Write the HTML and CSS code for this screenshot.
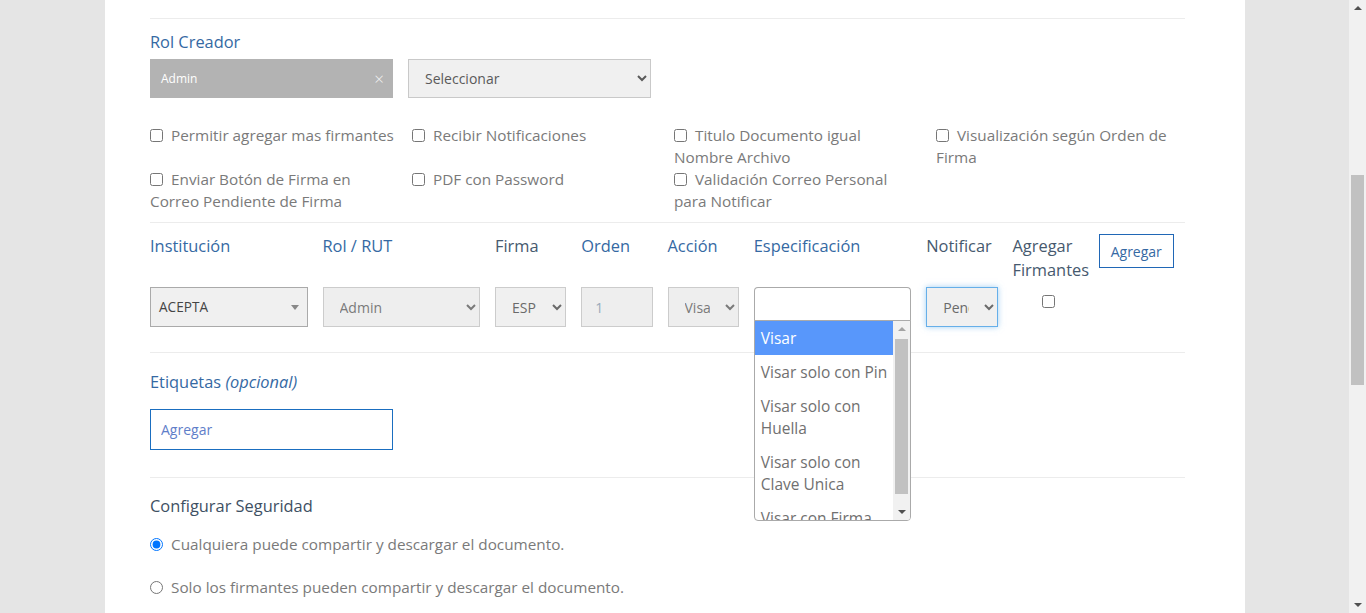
FILE: index.html
```html
<!DOCTYPE html>
<html lang="es">
<head>
<meta charset="utf-8">
<title>Firmantes</title>
<link rel="stylesheet" href="styles.css">
</head>
<body>
<div class="viewport">
  <div class="page">
    <div class="card">
      <hr class="rule rule-first">

      <div class="label-blue label-rol">Rol Creador</div>
      <div class="rol-row">
        <div class="tag"><span>Admin</span><span class="tag-x">×</span></div>
        <select class="sel sel-rol"><option>Seleccionar</option></select>
      </div>

      <div class="opts">
        <label class="opt"><input type="checkbox">Permitir agregar mas firmantes</label>
        <label class="opt"><input type="checkbox">Recibir Notificaciones</label>
        <label class="opt"><input type="checkbox">Titulo Documento igual Nombre Archivo</label>
        <label class="opt"><input type="checkbox">Visualización según Orden de Firma</label>
        <label class="opt"><input type="checkbox">Enviar Botón de Firma en Correo Pendiente de Firma</label>
        <label class="opt"><input type="checkbox">PDF con Password</label>
        <label class="opt"><input type="checkbox">Validación Correo Personal para Notificar</label>
      </div>

      <hr class="rule rule-sign">

      <div class="signers">
        <div class="head span2">Institución</div>
        <div class="head span2">Rol / RUT</div>
        <div class="head head-dark">Firma</div>
        <div class="head">Orden</div>
        <div class="head">Acción</div>
        <div class="head span2">Especificación</div>
        <div class="head head-dark">Notificar</div>
        <div class="head head-dark">Agregar Firmantes</div>
        <div class="head"><button class="btn-add" type="button">Agregar</button></div>

        <div class="cell span2">
          <div class="s2-single"><span>ACEPTA</span><span class="s2-arrow"></span></div>
        </div>
        <div class="cell span2"><select class="sel sel-field sel-light"><option>Admin</option></select></div>
        <div class="cell"><select class="sel sel-field sel-dark"><option>ESP</option></select></div>
        <div class="cell"><input class="inp-orden" type="text" value="1" disabled></div>
        <div class="cell"><select class="sel sel-field sel-light sel-clip"><option>Visar</option></select></div>
        <div class="cell span2 spec">
          <div class="s2-search"></div>
          <div class="s2-drop">
            <ul class="s2-results">
              <li class="s2-item is-active">Visar</li>
              <li class="s2-item">Visar solo con Pin</li>
              <li class="s2-item">Visar solo con Huella</li>
              <li class="s2-item">Visar solo con Clave Unica</li>
              <li class="s2-item">Visar con Firma</li>
            </ul>
            <div class="mini-scroll">
              <span class="arrow-up arrow-light"></span>
              <div class="mini-track"><div class="mini-thumb"></div></div>
              <span class="arrow-down"></span>
            </div>
          </div>
        </div>
        <div class="cell"><select class="sel sel-field sel-dark sel-focus sel-clip"><option>Pendiente</option></select></div>
        <div class="cell cell-check"><input type="checkbox"></div>
        <div class="cell"></div>
      </div>

      <hr class="rule rule-tags">

      <div class="label-blue label-tags">Etiquetas <em>(opcional)</em></div>
      <input class="inp-tags" type="text" placeholder="Agregar">

      <hr class="rule rule-sec">

      <div class="label-sec">Configurar Seguridad</div>
      <label class="radio radio-1"><input type="radio" name="seg" checked>Cualquiera puede compartir y descargar el documento.</label>
      <label class="radio radio-2"><input type="radio" name="seg">Solo los firmantes pueden compartir y descargar el documento.</label>
    </div>
  </div>
  <div class="vscroll">
    <span class="arrow-up"></span>
    <div class="vtrack"><div class="vthumb"></div></div>
    <span class="arrow-down"></span>
  </div>
</div>
</body>
</html>
```

FILE: styles.css
```css
* { box-sizing: border-box; }

html, body {
  margin: 0;
  padding: 0;
  height: 613px;
  overflow: hidden;
}

body {
  font-family: "Open Sans", "Liberation Sans", Arial, sans-serif;
  font-size: 15.3px;
  line-height: 22px;
  color: #7a7a7a;
  background: #e5e5e5;
}

.viewport {
  display: flex;
  height: 613px;
}

.page {
  flex: 1;
  background: #e5e5e5;
  height: 613px;
}

.card {
  margin: 0 104px 0 105px;
  background: #fff;
  height: 613px;
  padding: 0 60px 0 45px;
  display: flex;
  flex-direction: column;
  align-items: flex-start;
}

.rule {
  width: 100%;
  border: 0;
  border-top: 1px solid #ececec;
  margin: 0;
  height: 0;
  flex: none;
}

.rule-first { margin-top: 18px; }
.rule-sign { margin-top: 10px; }
.rule-tags { margin-top: 25px; }
.rule-sec { margin-top: 27px; }

.label-blue {
  color: #3569a3;
  font-size: 16.4px;
  line-height: 22px;
}

.label-rol { margin-top: 12px; }

.rol-row {
  display: flex;
  gap: 15px;
  margin-top: 6px;
}

.tag {
  width: 243px;
  height: 39px;
  background: #b3b3b3;
  color: #fff;
  font-size: 12px;
  display: flex;
  align-items: center;
  justify-content: space-between;
  padding: 0 9px 0 11px;
}

.tag-x {
  color: #f2f2f2;
  font-size: 17px;
  font-weight: 300;
}

.sel {
  font-family: "Open Sans", "Liberation Sans", Arial, sans-serif;
  font-size: 14px;
  color: #5a5a5a;
  background-color: #f0f0f0;
  border: 1px solid #c9c9c9;
  border-radius: 0;
  padding: 0 6px 0 12px;
  margin: 0;
}

.sel-rol {
  width: 243px;
  height: 39px;
}

.opts {
  display: grid;
  grid-template-columns: 262px 262px 262px minmax(0, 1fr);
  width: 100%;
  margin-top: 26px;
}

.opt {
  display: block;
  padding-right: 17px;
  line-height: 22px;
  color: #7a7a7a;
}

.opt input, .radio input {
  width: 13px;
  height: 13px;
  margin: 0 8px 0 0;
  vertical-align: -1px;
}

.signers {
  display: grid;
  grid-template-columns: repeat(12, minmax(0, 1fr));
  row-gap: 5px;
  width: 100%;
  margin-top: 11px;
}

.span2 { grid-column: span 2; }

.head {
  padding-right: 15px;
  font-size: 16.4px;
  line-height: 24px;
  color: #3569a3;
  min-width: 0;
}

.head-dark { color: #46596e; }

.btn-add {
  font-family: "Open Sans", "Liberation Sans", Arial, sans-serif;
  font-size: 14px;
  color: #3569a3;
  background: #fff;
  border: 1px solid #2067b6;
  border-radius: 0;
  width: 75px;
  height: 34px;
  padding: 0;
  margin: 0;
}

.cell {
  padding-right: 15px;
  height: 40px;
  min-width: 0;
}

.s2-single {
  height: 40px;
  background: #f0f0f0;
  border: 1px solid #aaa;
  color: #444;
  font-size: 13.6px;
  display: flex;
  align-items: center;
  justify-content: space-between;
  padding: 0 8px 0 8px;
}

.s2-arrow {
  width: 0;
  height: 0;
  border-left: 4px solid transparent;
  border-right: 4px solid transparent;
  border-top: 5px solid #888;
}

.sel-field {
  width: 100%;
  height: 40px;
}

.sel-light {
  background-color: #eeeeee;
  border-color: #cccccc;
  color: #7a7a7a;
}

.sel-dark {
  background-color: #f0f0f0;
  border-color: #cccccc;
  color: #6a6a6a;
}

.sel-clip {
  padding-right: 12px;
}

.sel-focus {
  border-color: #66afe9;
  box-shadow: 0 0 6px rgba(102, 175, 233, 0.6);
  outline: none;
}

.inp-orden {
  width: 100%;
  height: 40px;
  background: #eeeeee;
  border: 1px solid #cccccc;
  border-radius: 0;
  font-family: "Open Sans", "Liberation Sans", Arial, sans-serif;
  font-size: 14px;
  color: #9aaabb;
  -webkit-text-fill-color: #9aaabb;
  padding: 0 0 0 13px;
  margin: 0;
}

.spec {
  position: relative;
  z-index: 5;
}

.s2-search {
  height: 34px;
  background: #fff;
  border: 1px solid #aaa;
  border-bottom: 0;
  border-radius: 4px 4px 0 0;
}

.s2-drop {
  position: absolute;
  left: 0;
  top: 33px;
  width: calc(100% - 15px);
  height: 201px;
  background: #fff;
  border: 1px solid #aaa;
  border-radius: 0 0 4px 4px;
  display: flex;
  overflow: hidden;
}

.s2-results {
  list-style: none;
  margin: 0;
  padding: 0;
  flex: 1;
  min-width: 0;
  overflow: hidden;
}

.s2-item {
  padding: 6px 6px;
  font-size: 15.5px;
  line-height: 22px;
  color: #707070;
}

.s2-item.is-active {
  background: #5897fb;
  color: #fff;
}

.mini-scroll {
  width: 17px;
  flex: none;
  background: #f1f1f1;
  display: flex;
  flex-direction: column;
  align-items: center;
}

.mini-track {
  flex: 1;
  width: 100%;
  padding: 0 2px;
}

.mini-thumb {
  margin-top: 1px;
  height: 155px;
  background: #c1c1c1;
}

.arrow-up, .arrow-down {
  display: block;
  width: 0;
  height: 0;
  border-left: 4px solid transparent;
  border-right: 4px solid transparent;
  flex: none;
}

.arrow-up {
  border-bottom: 4px solid #505050;
  margin: 6px 0 7px;
}

.arrow-down {
  border-top: 4px solid #505050;
  margin: 7px 0 6px;
}

.arrow-light.arrow-up { border-bottom-color: #a3a3a3; }

.cell-check {
  display: flex;
  justify-content: center;
  padding-top: 8px;
}

.cell-check input {
  width: 13px;
  height: 13px;
  margin: 0;
}

.label-tags {
  margin-top: 18px;
}

.label-tags em {
  font-style: italic;
}

.inp-tags {
  margin-top: 16px;
  width: 243px;
  height: 41px;
  border: 1px solid #1a6ec0;
  border-radius: 0;
  padding: 0 10px;
  font-family: "Open Sans", "Liberation Sans", Arial, sans-serif;
  font-size: 14px;
  color: #333;
}

.inp-tags::placeholder {
  color: #5f7ec9;
  opacity: 1;
}

.label-sec {
  margin-top: 17px;
  font-size: 16.4px;
  line-height: 22px;
  color: #3e5063;
}

.radio {
  display: block;
  line-height: 22px;
  color: #7a7a7a;
}

.radio-1 { margin-top: 16px; }
.radio-2 { margin-top: 21px; }

.vscroll {
  width: 17px;
  height: 613px;
  background: #f1f1f1;
  display: flex;
  flex-direction: column;
  align-items: center;
  flex: none;
}

.vtrack {
  flex: 1;
  width: 100%;
  padding: 0 2px;
}

.vthumb {
  margin-top: 158px;
  height: 210px;
  background: #c1c1c1;
}
```
